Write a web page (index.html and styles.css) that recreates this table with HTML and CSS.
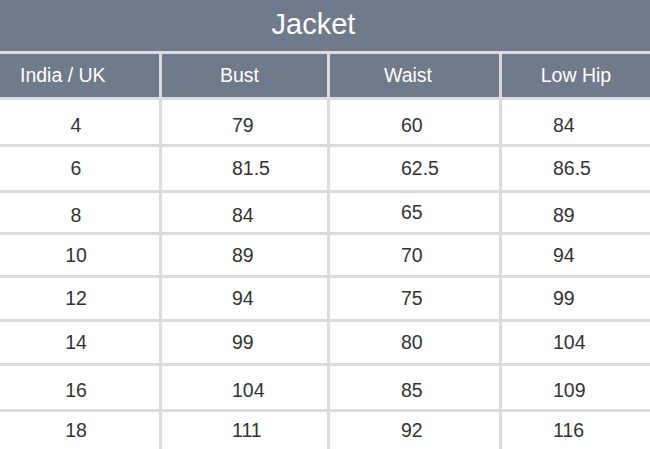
FILE: index.html
```html
<!DOCTYPE html>
<html>
<head>
<meta charset="utf-8">
<link rel="stylesheet" href="styles.css">
</head>
<body>
<div class="chart">
  <div class="title">Jacket</div>
  <div class="hd c1">India / UK</div>
  <div class="hd c2">Bust</div>
  <div class="hd c3">Waist</div>
  <div class="hd c4">Low Hip</div>

  <div class="cell c1 lo">4</div><div class="cell c2 lo">79</div><div class="cell c3 lo">60</div><div class="cell c4 lo">84</div>
  <div class="cell c1">6</div><div class="cell c2">81.5</div><div class="cell c3">62.5</div><div class="cell c4">86.5</div>
  <div class="cell c1 lo">8</div><div class="cell c2 lo">84</div><div class="cell c3">65</div><div class="cell c4 lo">89</div>
  <div class="cell c1">10</div><div class="cell c2">89</div><div class="cell c3">70</div><div class="cell c4">94</div>
  <div class="cell c1">12</div><div class="cell c2">94</div><div class="cell c3">75</div><div class="cell c4">99</div>
  <div class="cell c1">14</div><div class="cell c2">99</div><div class="cell c3">80</div><div class="cell c4">104</div>
  <div class="cell c1 lo">16</div><div class="cell c2 lo">104</div><div class="cell c3 lo">85</div><div class="cell c4 lo">109</div>
  <div class="cell c1 last">18</div><div class="cell c2 last">111</div><div class="cell c3 last">92</div><div class="cell c4 last">116</div>
</div>
</body>
</html>
```

FILE: styles.css
```css
html, body {
  margin: 0;
  padding: 0;
  background: #ffffff;
}
body {
  font-family: "Liberation Sans", Arial, sans-serif;
  width: 650px;
  height: 449px;
  overflow: hidden;
}
.chart {
  display: grid;
  grid-template-columns: 159px 165px 169px 151px;
  grid-template-rows: 51px 43px 44px 43px 39px 40px 41px 41px 43px 42px;
  gap: 3px;
  background: #dcdcdc;
  width: 650px;
}
.title {
  grid-column: 1 / -1;
  background: #6f7a8b;
  color: #ffffff;
  font-size: 29px;
  display: flex;
  align-items: center;
  justify-content: center;
  padding-right: 26px;
  padding-bottom: 2px;
}
.hd {
  background: #6f7a8b;
  color: #ffffff;
  font-size: 19.5px;
  display: flex;
  align-items: center;
  justify-content: center;
}
.hd.c1 { justify-content: flex-start; padding-left: 20px; }
.hd.c2 { padding-right: 10px; }
.hd.c3 { padding-right: 13px; }
.hd.c4 { padding-right: 3px; }
.cell {
  background: #ffffff;
  color: #333333;
  font-size: 19.5px;
  display: flex;
  align-items: center;
}
.cell.lo { padding-top: 6px; }
.cell.last { padding-bottom: 6px; }
.cell.c1 { justify-content: center; padding-right: 7px; }
.cell.c2 { padding-left: 70px; }
.cell.c3 { padding-left: 71px; }
.cell.c4 { padding-left: 51px; }
```
